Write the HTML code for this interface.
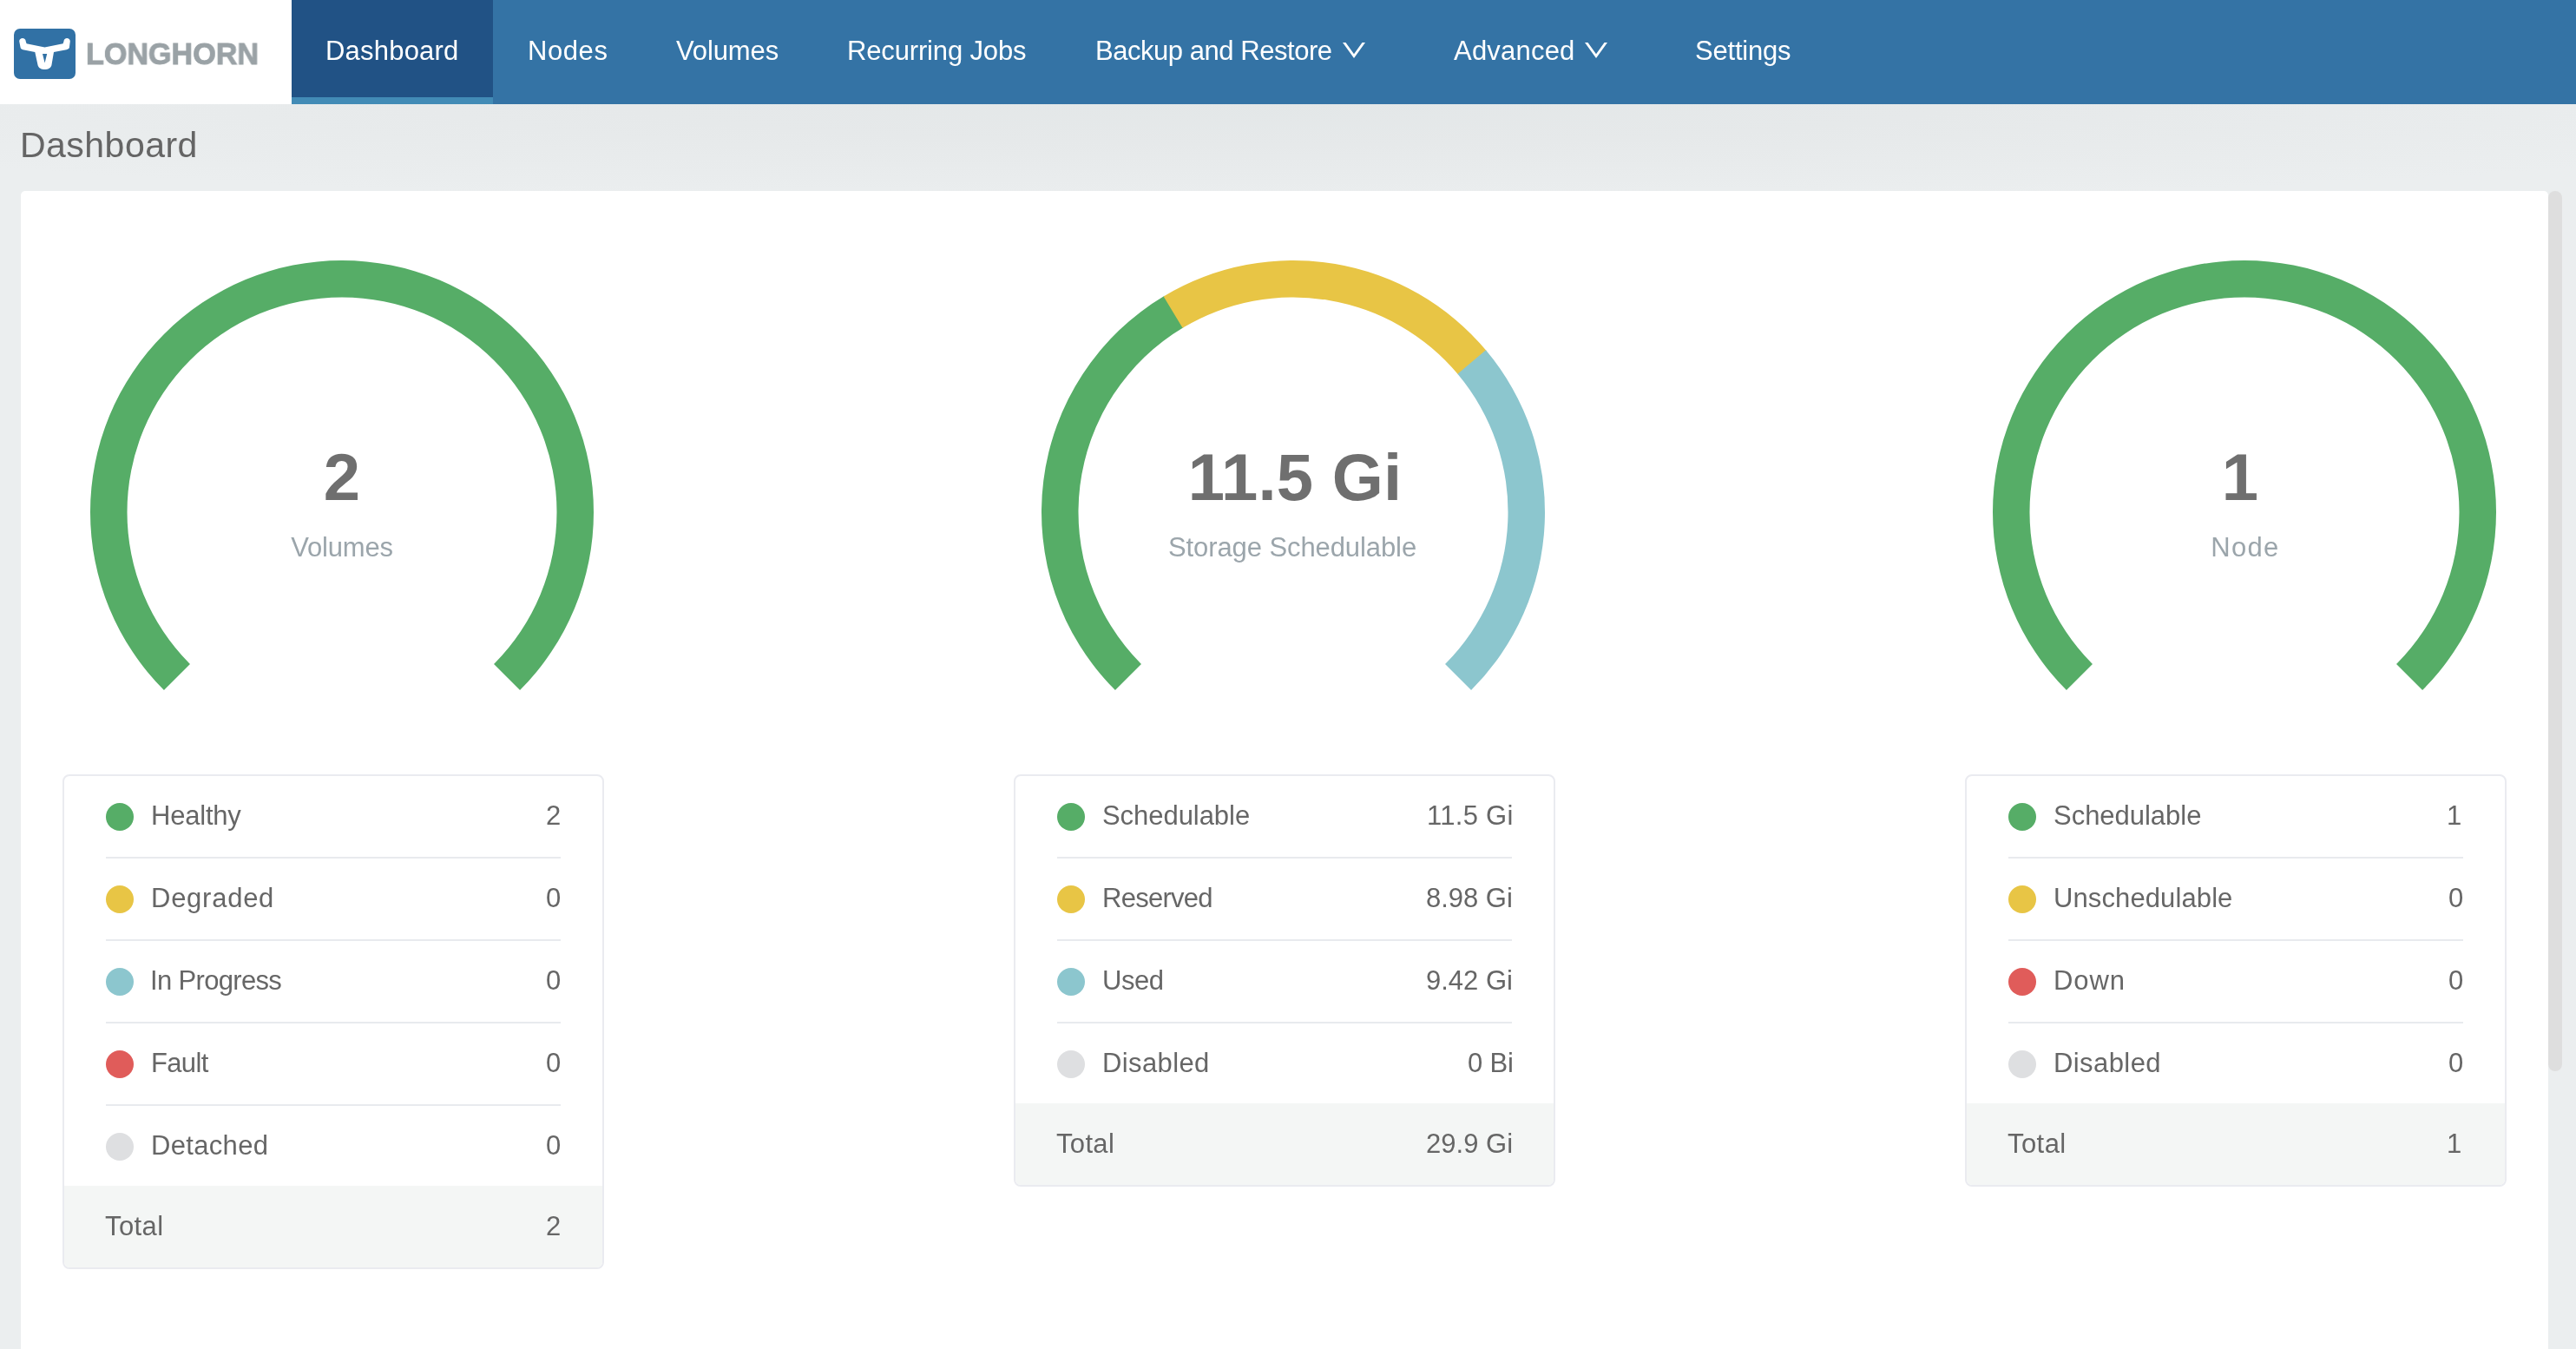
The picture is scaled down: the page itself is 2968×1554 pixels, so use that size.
<!DOCTYPE html>
<html lang="en"><head><meta charset="utf-8"><title>Longhorn</title>
<style>
html,body{margin:0;padding:0}
@media (max-width:1600px){body{zoom:.5}}
body{width:2968px;height:1554px;overflow:hidden;position:relative;font-family:"Liberation Sans", Arial, sans-serif;background:#ebeeef;
background-image:radial-gradient(ellipse 1900px 120px at 1484px 118px,#e3e7e8 0,#e6e9ea 760px,#ebeeef 1900px);}
.hdr{position:absolute;left:0;top:0;width:2968px;height:120px;background:#3473a5}
.logo{position:absolute;left:0;top:0;width:336px;height:120px;background:#fff}
.act{position:absolute;left:336px;top:0;width:232px;height:112px;background:#215285;border-bottom:8px solid #428bb6}
.card{position:absolute;left:24px;top:220px;width:2912px;height:1400px;background:#fff;border-radius:5px}
.sb{position:absolute;left:2936px;top:220px;width:16px;height:1014px;background:#dedede;border-radius:8px}
.t{position:absolute;white-space:nowrap;line-height:1;margin:0;will-change:transform}
.tb{position:absolute;box-sizing:border-box;border:2px solid #eaebf0;border-radius:8px;background:#fff;overflow:hidden}
.tot{position:absolute;left:0;right:0;bottom:0;height:94px;background:#f4f6f5}
.sep{position:absolute;left:48px;right:48px;height:2px;background:#e8eaee}
.dot{position:absolute;width:32px;height:32px;border-radius:50%}
svg{position:absolute;left:0;top:0}
.lh{position:absolute;left:101px;top:0;font-weight:700;color:#9aa2a6;white-space:nowrap;line-height:1;transform-origin:0 0;will-change:transform}
</style></head><body>

<div class="hdr"><div class="logo"></div><div class="act"></div></div>
<div class="card"></div><div class="sb"></div>
<div class="tb" style="left:72px;top:892px;width:624px;height:570px">
<div class="tot"></div>
<div class="sep" style="top:93px"></div>
<div class="sep" style="top:188px"></div>
<div class="sep" style="top:283px"></div>
<div class="sep" style="top:378px"></div>
<div class="dot" style="left:48px;top:30.5px;background:#56ad67"></div>
<div class="dot" style="left:48px;top:125.5px;background:#e8c545"></div>
<div class="dot" style="left:48px;top:220.5px;background:#8cc6ce"></div>
<div class="dot" style="left:48px;top:315.5px;background:#e05c5a"></div>
<div class="dot" style="left:48px;top:410.5px;background:#dedfe1"></div>
</div>
<div class="tb" style="left:1168px;top:892px;width:624px;height:475px">
<div class="tot"></div>
<div class="sep" style="top:93px"></div>
<div class="sep" style="top:188px"></div>
<div class="sep" style="top:283px"></div>
<div class="dot" style="left:48px;top:30.5px;background:#56ad67"></div>
<div class="dot" style="left:48px;top:125.5px;background:#e8c545"></div>
<div class="dot" style="left:48px;top:220.5px;background:#8cc6ce"></div>
<div class="dot" style="left:48px;top:315.5px;background:#dedfe1"></div>
</div>
<div class="tb" style="left:2264px;top:892px;width:624px;height:475px">
<div class="tot"></div>
<div class="sep" style="top:93px"></div>
<div class="sep" style="top:188px"></div>
<div class="sep" style="top:283px"></div>
<div class="dot" style="left:48px;top:30.5px;background:#56ad67"></div>
<div class="dot" style="left:48px;top:125.5px;background:#e8c545"></div>
<div class="dot" style="left:48px;top:220.5px;background:#e05c5a"></div>
<div class="dot" style="left:48px;top:315.5px;background:#dedfe1"></div>
</div>
<svg width="2968" height="1554" viewBox="0 0 2968 1554"><rect x="16" y="33" width="71" height="58" rx="7" ry="7" fill="#3171a5"/><path fill="#fff" fill-rule="evenodd" d="M22.2,47.5 C22.2,42.8 29.7,42.8 29.7,47.5 L30.6,50.2 L51.5,54.5 L72.6,50.2 L73.5,47.5 C73.5,42.8 80.8,42.8 80.8,47.5 L79.9,54.8 C79.5,56.3 78.4,56.8 76.6,57.2 L62,60 L59.4,75.2 C58,81.6 45,81.6 43.6,75.2 L40.3,60 L26.4,57.2 C24.6,56.8 24,56.2 23.6,54.8 Z M49,62 L54.2,62 L51.6,72.6 Z"/><path d="M188.94,795.06A290,290 0 1 1 599.06,795.06L569.01,765.01A247.5,247.5 0 1 0 218.99,765.01Z" fill="#56ad67"/><path d="M1284.94,795.06A290,290 0 0 1 1341.72,340.77L1363.45,377.30A247.5,247.5 0 0 0 1314.99,765.01Z" fill="#56ad67"/><path d="M1340.64,341.42A290,290 0 0 1 1712.76,404.32L1680.11,431.53A247.5,247.5 0 0 0 1362.53,377.85Z" fill="#e8c545"/><path d="M1711.95,403.35A290,290 0 0 1 1695.06,795.06L1665.01,765.01A247.5,247.5 0 0 0 1679.42,430.70Z" fill="#8cc6ce"/><path d="M2380.94,795.06A290,290 0 1 1 2791.06,795.06L2761.01,765.01A247.5,247.5 0 1 0 2410.99,765.01Z" fill="#56ad67"/><path d="M1547.0,49 L1550.5,49 L1560.0,62.2 L1569.5,49 L1573.0,49 L1560.0,66.9 Z" fill="#fff"/><path d="M1826.0,49 L1829.5,49 L1839.0,62.2 L1848.5,49 L1852.0,49 L1839.0,66.9 Z" fill="#fff"/></svg>
<div class="lh" id="lh" style="font-size:34.4px;top:44.6px;left:99.4px;-webkit-text-stroke:0.9px #9aa2a6;transform:scaleX(0.992)">LONGHORN</div>
<div class="t" id="t0" style="top:42.75px;font-size:31px;color:#fff;letter-spacing:0.207px;left:375.05px;">Dashboard</div>
<div class="t" id="t1" style="top:42.75px;font-size:31px;color:#fff;letter-spacing:0.578px;left:607.55px;">Nodes</div>
<div class="t" id="t2" style="top:42.75px;font-size:31px;color:#fff;letter-spacing:-0.116px;left:779.32px;">Volumes</div>
<div class="t" id="t3" style="top:42.75px;font-size:31px;color:#fff;letter-spacing:-0.155px;left:976.05px;">Recurring Jobs</div>
<div class="t" id="t4" style="top:42.75px;font-size:31px;color:#fff;letter-spacing:-0.464px;left:1262.05px;">Backup and Restore</div>
<div class="t" id="t5" style="top:42.75px;font-size:31px;color:#fff;letter-spacing:0.212px;left:1675.10px;">Advanced</div>
<div class="t" id="t6" style="top:42.75px;font-size:31px;color:#fff;letter-spacing:-0.200px;left:1953.32px;">Settings</div>
<div class="t" id="t7" style="top:147.29px;font-size:41px;color:#656565;letter-spacing:0.476px;left:23.14px;">Dashboard</div>
<div class="t" id="t8" style="top:512.15px;font-size:76px;color:#6f6f6f;font-weight:700;left:-605.74px;width:2000px;text-align:center;">2</div>
<div class="t" id="t9" style="top:512.15px;font-size:76px;color:#6f6f6f;font-weight:700;letter-spacing:0.226px;left:491.71px;width:2000px;text-align:center;">11.5 Gi</div>
<div class="t" id="t10" style="top:512.15px;font-size:76px;color:#6f6f6f;font-weight:700;left:1580.64px;width:2000px;text-align:center;">1</div>
<div class="t" id="t11" style="top:614.75px;font-size:31px;color:#9ba5ab;letter-spacing:-0.195px;left:-605.92px;width:2000px;text-align:center;">Volumes</div>
<div class="t" id="t12" style="top:614.75px;font-size:31px;color:#9ba5ab;letter-spacing:-0.091px;left:489.33px;width:2000px;text-align:center;">Storage Schedulable</div>
<div class="t" id="t13" style="top:614.75px;font-size:31px;color:#9ba5ab;letter-spacing:1.312px;left:1586.84px;width:2000px;text-align:center;">Node</div>
<div class="t" id="t14" style="top:923.75px;font-size:31px;color:#666666;letter-spacing:-0.212px;left:173.91px;">Healthy</div>
<div class="t" id="t15" style="top:923.75px;font-size:31px;color:#666666;right:2322.20px;">2</div>
<div class="t" id="t16" style="top:1018.75px;font-size:31px;color:#666666;letter-spacing:0.742px;left:173.91px;">Degraded</div>
<div class="t" id="t17" style="top:1018.75px;font-size:31px;color:#666666;right:2322.20px;">0</div>
<div class="t" id="t18" style="top:1113.75px;font-size:31px;color:#666666;letter-spacing:-0.667px;left:173.00px;">In Progress</div>
<div class="t" id="t19" style="top:1113.75px;font-size:31px;color:#666666;right:2322.20px;">0</div>
<div class="t" id="t20" style="top:1208.75px;font-size:31px;color:#666666;letter-spacing:-0.655px;left:173.91px;">Fault</div>
<div class="t" id="t21" style="top:1208.75px;font-size:31px;color:#666666;right:2322.20px;">0</div>
<div class="t" id="t22" style="top:1303.75px;font-size:31px;color:#666666;letter-spacing:0.322px;left:173.91px;">Detached</div>
<div class="t" id="t23" style="top:1303.75px;font-size:31px;color:#666666;right:2322.20px;">0</div>
<div class="t" id="t24" style="top:1397.25px;font-size:31px;color:#666666;letter-spacing:0.393px;left:121.26px;">Total</div>
<div class="t" id="t25" style="top:1397.25px;font-size:31px;color:#666666;right:2322.20px;">2</div>
<div class="t" id="t26" style="top:923.75px;font-size:31px;color:#666666;letter-spacing:-0.052px;left:1270.15px;">Schedulable</div>
<div class="t" id="t27" style="top:923.75px;font-size:31px;color:#666666;letter-spacing:0.280px;right:1224.60px;">11.5 Gi</div>
<div class="t" id="t28" style="top:1018.75px;font-size:31px;color:#666666;letter-spacing:-0.734px;left:1269.91px;">Reserved</div>
<div class="t" id="t29" style="top:1018.75px;font-size:31px;color:#666666;letter-spacing:-0.030px;right:1225.30px;">8.98 Gi</div>
<div class="t" id="t30" style="top:1113.75px;font-size:31px;color:#666666;letter-spacing:-0.496px;left:1269.54px;">Used</div>
<div class="t" id="t31" style="top:1113.75px;font-size:31px;color:#666666;letter-spacing:0.001px;right:1224.63px;">9.42 Gi</div>
<div class="t" id="t32" style="top:1208.75px;font-size:31px;color:#666666;letter-spacing:0.379px;left:1269.91px;">Disabled</div>
<div class="t" id="t33" style="top:1208.75px;font-size:31px;color:#666666;letter-spacing:-0.183px;right:1224.70px;">0 Bi</div>
<div class="t" id="t34" style="top:1302.25px;font-size:31px;color:#666666;letter-spacing:0.338px;left:1217.26px;">Total</div>
<div class="t" id="t35" style="top:1302.25px;font-size:31px;color:#666666;letter-spacing:0.023px;right:1224.61px;">29.9 Gi</div>
<div class="t" id="t36" style="top:923.75px;font-size:31px;color:#666666;letter-spacing:-0.023px;left:2366.15px;">Schedulable</div>
<div class="t" id="t37" style="top:923.75px;font-size:31px;color:#666666;right:131.40px;">1</div>
<div class="t" id="t38" style="top:1018.75px;font-size:31px;color:#666666;letter-spacing:0.106px;left:2365.54px;">Unschedulable</div>
<div class="t" id="t39" style="top:1018.75px;font-size:31px;color:#666666;right:130.20px;">0</div>
<div class="t" id="t40" style="top:1113.75px;font-size:31px;color:#666666;letter-spacing:0.899px;left:2365.91px;">Down</div>
<div class="t" id="t41" style="top:1113.75px;font-size:31px;color:#666666;right:130.20px;">0</div>
<div class="t" id="t42" style="top:1208.75px;font-size:31px;color:#666666;letter-spacing:0.423px;left:2365.91px;">Disabled</div>
<div class="t" id="t43" style="top:1208.75px;font-size:31px;color:#666666;right:130.20px;">0</div>
<div class="t" id="t44" style="top:1302.25px;font-size:31px;color:#666666;letter-spacing:0.439px;left:2313.26px;">Total</div>
<div class="t" id="t45" style="top:1302.25px;font-size:31px;color:#666666;right:131.40px;">1</div>
</body></html>
